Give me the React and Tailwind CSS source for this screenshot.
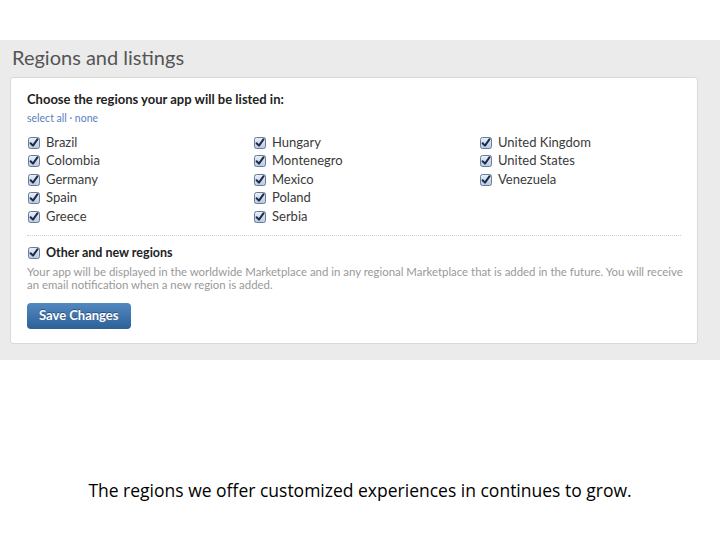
const left = ['Brazil', 'Colombia', 'Germany', 'Spain', 'Greece']
const mid = ['Hungary', 'Montenegro', 'Mexico', 'Poland', 'Serbia']
const right = ['United Kingdom', 'United States', 'Venezuela']

function Check() {
  return (
    <svg width="12" height="12" viewBox="0 0 12 12" className="shrink-0">
      <defs>
        <linearGradient id="cb" x1="0" y1="0" x2="0" y2="1">
          <stop offset="0" stopColor="#e9f0fa" />
          <stop offset="1" stopColor="#b7c8e2" />
        </linearGradient>
      </defs>
      <rect x="0.5" y="0.5" width="11" height="11" rx="2" fill="url(#cb)" stroke="#6a7c98" />
      <path d="M2.6 6.2 L5 8.6 L9.6 2.2" fill="none" stroke="#1d2b47" strokeWidth="2" strokeLinecap="round" strokeLinejoin="round" />
    </svg>
  )
}

function Item({ label }) {
  return (
    <div className="flex h-[18.5px] items-center gap-[6px] text-[13px] text-[#3a3a3a]">
      <Check />
      <span>{label}</span>
    </div>
  )
}

export default function App() {
  return (
    <div className="h-[540px] w-[720px] bg-white font-['Lato',sans-serif]">
      <div className="h-[40px]" />
      <div className="bg-[#ebebeb] px-[10px] pb-[16px] pt-[3px]">
        <h1 className="pl-[2px] text-[20px] leading-[28px] text-[#555]">Regions and listings</h1>
        <div className="mt-[6px] w-[688px] rounded-[3px] border border-[#dcd9cf] bg-white px-[16px] pb-[14px] pt-[12px]">
          <p className="text-[13px] font-bold text-[#222]">Choose the regions your app will be listed in:</p>
          <p className="mt-[1px] text-[10.5px] text-[#5a80c0]">select all · none</p>
          <div className="mt-[7px] grid grid-cols-[226px_226px_1fr] pl-[1px]">
            <div>{left.map((c) => <Item key={c} label={c} />)}</div>
            <div>{mid.map((c) => <Item key={c} label={c} />)}</div>
            <div>{right.map((c) => <Item key={c} label={c} />)}</div>
          </div>
          <div className="mt-[9px] border-t border-dotted border-[#cfcfcf]" />
          <div className="mt-[8px] flex items-center gap-[6px] pl-[1px] text-[12.5px] font-bold text-[#222]">
            <Check />
            <span>Other and new regions</span>
          </div>
          <p className="-mr-[8px] mt-[2px] text-[11.4px] leading-[13px] text-[#999]">
            Your app will be displayed in the worldwide Marketplace and in any regional Marketplace that is added in the future. You will receive an email notification when a new region is added.
          </p>
          <button
            type="button"
            className="mt-[12px] h-[26px] rounded-[4px] bg-gradient-to-b from-[#5288c0] to-[#2c6098] px-[12px] text-[13px] font-bold text-white [text-shadow:0_-1px_0_rgba(0,0,0,0.35)]"
          >
            Save Changes
          </button>
        </div>
      </div>
      <p className="mt-[117px] text-center font-['Open_Sans',sans-serif] text-[17.5px] text-black">
        The regions we offer customized experiences in continues to grow.
      </p>
    </div>
  )
}
